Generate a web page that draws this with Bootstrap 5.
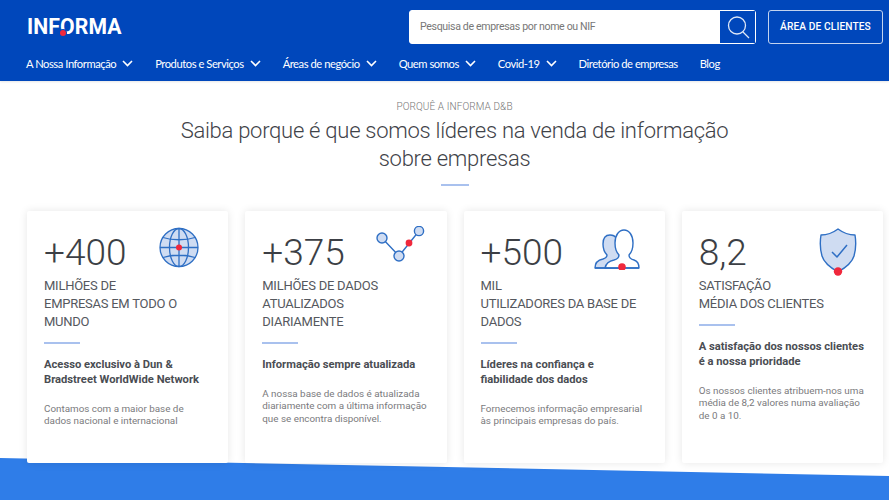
<!doctype html>
<html lang="pt"><head><meta charset="utf-8"><title>Informa</title>
<link href="https://cdn.jsdelivr.net/npm/bootstrap@5.3.0/dist/css/bootstrap.min.css" rel="stylesheet">
<style>
html,body{height:500px;overflow:hidden;background:#fff}
body{font-family:Roboto,"Liberation Sans",sans-serif}
.topbar{background:#0047bb;height:81px;padding:10px 6px 0 26px;box-shadow:0 1px 2px rgba(0,0,0,.1)}
.toprow{height:34px}
.brand{position:relative;color:#fff;font:700 21.2px/34px Roboto,sans-serif;letter-spacing:.1px;margin-left:1px}
.brand-dot{position:absolute;left:33px;top:20px;width:6px;height:6px;border-radius:50%;background:#f0283c;box-shadow:0 0 0 1px #0047bb}
.searchbox{width:347px;height:34px;background:#fff;border-radius:3px;border:1px solid #fff}
.searchbox span{font-size:10.6px;color:#777;padding-left:10px;letter-spacing:-.35px}
.searchbtn{width:35px;height:32px;background:#0047bb}
.clientbtn{width:115px;height:34px;border:1.5px solid #c3d3ef;border-radius:3px;color:#fff;font-size:10.2px;font-weight:500;letter-spacing:.1px;margin-left:12px;background:transparent}
.navline{height:39px;gap:22px;font:11.2px Lato,Roboto,sans-serif;letter-spacing:-.45px;color:#fff}
.navline a{color:#fff;text-decoration:none;display:flex;align-items:center;gap:6px}
.intro{padding:18px 0 0 20px;text-align:center;height:130px}
.eyebrow{font-size:10px;font-weight:300;letter-spacing:.1px;color:#777;line-height:16px}
.headline{font-size:22px;font-weight:300;line-height:28px;color:#3f4349;margin:2px 0 0;letter-spacing:-.27px}
.rule{height:1.5px;background:#a9c1ee;display:block}
.rule-short{width:28px;margin:11px auto 0}
.cards{padding:0 6px 0 27px;gap:17px;position:relative;z-index:1}
.stat{flex:1 1 0;min-height:252px;background:#fff;border-radius:2px;box-shadow:0 0 8px rgba(0,0,0,.1);padding:15px 12px 0 17px;color:#46494f}
.numrow{height:51px}
.num{font-size:37px;font-weight:300;line-height:48px;padding-top:3px;color:#3c3f45}
.lbl{font-size:13px;line-height:18px;letter-spacing:-.25px;color:#55585e;text-transform:uppercase;min-height:18px}
.rule-card{width:36px;margin:11px 0 0}
.ttl{font-size:11.2px;font-weight:700;line-height:15px;margin:13px 0 0;color:#4a4d53}
.desc{font-size:9.85px;line-height:12.6px;margin:16px 0 0;color:#7a7a7d}
.ic1{margin:1px 17px 0 0}.ic2{margin:0 9px 0 0}.ic3{margin:2px 13px 0 0}.ic4{margin:2px 14px 0 0}
.band{height:42px;margin-top:-5px;background:#2f7de8;clip-path:polygon(0 0,100% 18px,100% 100%,0 100%)}
</style></head><body>
<header class="topbar">
 <div class="d-flex align-items-center toprow">
  <div class="brand">INFORMA<span class="brand-dot"></span></div>
  <form class="ms-auto d-flex align-items-center justify-content-between searchbox"><span>Pesquisa de empresas por nome ou NIF</span>
   <div class="d-flex align-items-center justify-content-center searchbtn"><svg width="24" height="24" viewBox="0 0 24 24" fill="none" stroke="#dfe8f7" stroke-width="1.3"><circle cx="11" cy="10.5" r="8.5"/><path d="M17 17l6 6"/></svg></div></form>
  <button class="btn p-0 clientbtn" type="button">ÁREA DE CLIENTES</button>
 </div>
 <nav class="d-flex align-items-center navline">
  <a href="#">A Nossa Informação <svg width="11" height="7" viewBox="0 0 11 7" fill="none" stroke="#fff" stroke-width="1.6"><path d="M1 1l4.5 4.5L10 1"/></svg></a>
  <a href="#">Produtos e Serviços <svg width="11" height="7" viewBox="0 0 11 7" fill="none" stroke="#fff" stroke-width="1.6"><path d="M1 1l4.5 4.5L10 1"/></svg></a>
  <a href="#">Áreas de negócio <svg width="11" height="7" viewBox="0 0 11 7" fill="none" stroke="#fff" stroke-width="1.6"><path d="M1 1l4.5 4.5L10 1"/></svg></a>
  <a href="#">Quem somos <svg width="11" height="7" viewBox="0 0 11 7" fill="none" stroke="#fff" stroke-width="1.6"><path d="M1 1l4.5 4.5L10 1"/></svg></a>
  <a href="#">Covid-19 <svg width="11" height="7" viewBox="0 0 11 7" fill="none" stroke="#fff" stroke-width="1.6"><path d="M1 1l4.5 4.5L10 1"/></svg></a>
  <a href="#">Diretório de empresas</a>
  <a href="#">Blog</a>
 </nav>
</header>
<section class="intro">
 <div class="eyebrow">PORQUÊ A INFORMA D&amp;B</div>
 <h1 class="headline">Saiba porque é que somos líderes na venda de informação<br>sobre empresas</h1>
 <span class="rule rule-short"></span>
</section>
<section class="d-flex cards">
 <article class="stat">
  <div class="d-flex justify-content-between align-items-start numrow"><div class="num">+400</div>
   <svg class="ic1" width="40" height="41" viewBox="0 0 40 41" fill="none" stroke="#2f6fc4" stroke-width="1.3"><circle cx="20" cy="20.5" r="19" fill="#cfdcf2"/><ellipse cx="20" cy="20.5" rx="9.5" ry="19"/><path d="M20 1.5v38M1 20.5h38M4 10.500c9 3 23 3 32 0M4 30.500c9-3 23-3 32 0"/><circle cx="20" cy="20.5" r="3" fill="#f0283c" stroke="none"/></svg></div>
  <div class="lbl">Milhões de<br>empresas em todo o<br>mundo</div>
  <span class="rule rule-card"></span>
  <h2 class="ttl">Acesso exclusivo à Dun &amp; Bradstreet WorldWide Network</h2>
  <p class="desc">Contamos com a maior base de<br>dados nacional e internacional</p>
 </article>
 <article class="stat">
  <div class="d-flex justify-content-between align-items-start numrow"><div class="num">+375</div>
   <svg class="ic2" width="50" height="38" viewBox="0 0 50 38" fill="none" stroke="#2f6fc4" stroke-width="1.4"><path d="M6 12l17 18 20-25"/><circle cx="6" cy="12" r="5" fill="#cfdcf2"/><circle cx="23" cy="30" r="5" fill="#cfdcf2"/><circle cx="43" cy="5" r="4.600" fill="#cfdcf2"/><circle cx="33" cy="17" r="3.400" fill="#f0283c" stroke="none"/></svg></div>
  <div class="lbl">Milhões de dados<br>atualizados<br>diariamente</div>
  <span class="rule rule-card"></span>
  <h2 class="ttl">Informação sempre atualizada</h2>
  <p class="desc">A nossa base de dados é atualizada diariamente com a última informação que se encontra disponível.</p>
 </article>
 <article class="stat">
  <div class="d-flex justify-content-between align-items-start numrow"><div class="num">+500</div>
   <svg class="ic3" width="46" height="42" viewBox="0 0 46 42" fill="none" stroke="#2f6fc4" stroke-width="1.4" stroke-linejoin="round"><path d="M1 40c0-6 3-8 8-9 3-1 4-2 4-4-3-3-4-6-4-11 0-6 3-9 7-9 3 0 5 1 6 3 3 3 4 26 3 30z" fill="#cfdcf2"/><path d="M11 40c1-5 4-7 9-8 4-1 5-3 5-5-3-3-4-7-4-12 0-8 4-13 9-13s9 5 9 13c0 5-1 9-4 12 0 2 1 4 5 5 3 1 5 4 5 8z" fill="#fff"/><path d="M1 40h44"/><circle cx="28" cy="39" r="3.800" fill="#f0283c" stroke="none"/></svg></div>
  <div class="lbl">Mil<br>utilizadores da base de<br>dados</div>
  <span class="rule rule-card"></span>
  <h2 class="ttl">Líderes na confiança e<br>fiabilidade dos dados</h2>
  <p class="desc">Fornecemos informação empresarial às principais empresas do país.</p>
 </article>
 <article class="stat">
  <div class="d-flex justify-content-between align-items-start numrow"><div class="num">8,2</div>
   <svg class="ic4" width="38" height="48" viewBox="0 0 38 48" fill="none" stroke="#2f6fc4" stroke-width="1.4" stroke-linejoin="round"><path d="M19 1c4 3 10 6 17 6 1 6 1 14-1 21-2 7-9 12-16 16-7-4-14-9-16-16C1 21 1 13 2 7c7 0 13-3 17-6z" fill="#cfdcf2"/><path d="M13 24l5 5 10-12" stroke-width="1.500"/><circle cx="19" cy="43.500" r="4.200" fill="#f0283c" stroke="none"/></svg></div>
  <div class="lbl">Satisfação<br>média dos clientes</div>
  <span class="rule rule-card"></span>
  <h2 class="ttl">A satisfação dos nossos clientes é a nossa prioridade</h2>
  <p class="desc">Os nossos clientes atribuem-nos uma média de 8,2 valores numa avaliação de 0 a 10.</p>
 </article>
</section>
<div class="band"></div>
<script src="https://cdn.jsdelivr.net/npm/bootstrap@5.3.0/dist/js/bootstrap.bundle.min.js"></script>
</body></html>
